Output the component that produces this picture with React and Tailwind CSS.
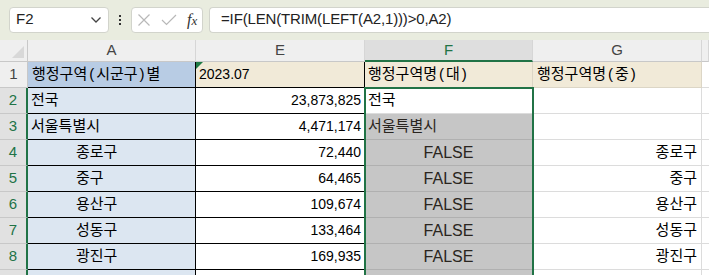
import React from 'react';

const KR = { fontFamily: '"Liberation Sans", "Noto Sans CJK KR", sans-serif' };

const rows = [
  { n: 2, a: '전국', indent: false, e: '23,873,825', f: '전국', g: '' },
  { n: 3, a: '서울특별시', indent: false, e: '4,471,174', f: '서울특별시', g: '' },
  { n: 4, a: '종로구', indent: true, e: '72,440', f: 'FALSE', g: '종로구' },
  { n: 5, a: '중구', indent: true, e: '64,465', f: 'FALSE', g: '중구' },
  { n: 6, a: '용산구', indent: true, e: '109,674', f: 'FALSE', g: '용산구' },
  { n: 7, a: '성동구', indent: true, e: '133,464', f: 'FALSE', g: '성동구' },
  { n: 8, a: '광진구', indent: true, e: '169,935', f: 'FALSE', g: '광진구' },
  { n: 9, a: '', indent: false, e: '', f: '', g: '' },
];

// wider parens, like the sheet font
function Label({ text }) {
  const parts = text.split(/([()])/);
  return (
    <span>
      {parts.map((p, i) =>
        p === '(' || p === ')' ? (
          <span key={i} className="mx-[2px]">{p}</span>
        ) : (
          <span key={i}>{p}</span>
        )
      )}
    </span>
  );
}

function FormulaBar() {
  return (
    <div className="flex items-center h-[40px] bg-[#e9ecdf] pl-[9px] pb-[7px] pt-[6px]">
      <div className="flex items-center justify-between w-[100px] h-[26px] bg-white border border-[#d2d4cc] rounded-[4px] pl-[6px] pr-[6px]">
        <span className="text-[15px] text-[#222]">F2</span>
        <svg width="12" height="8" viewBox="0 0 12 8">
          <path d="M1.5 1.5 L6 6 L10.5 1.5" fill="none" stroke="#444" strokeWidth="1.3" />
        </svg>
      </div>
      <div className="w-[22px] flex flex-col items-center gap-[2px]">
        <span className="w-[2px] h-[2px] bg-[#333]" />
        <span className="w-[2px] h-[2px] bg-[#333]" />
        <span className="w-[2px] h-[2px] bg-[#333]" />
      </div>
      <div className="flex items-center w-[72px] h-[26px] bg-white border border-[#d2d4cc] rounded-[4px] pl-[5px] gap-[10px]">
        <svg width="14" height="14" viewBox="0 0 14 14">
          <path d="M1.5 1.5 L12.5 12.5 M12.5 1.5 L1.5 12.5" stroke="#b8b8b8" strokeWidth="1.2" />
        </svg>
        <svg width="16" height="12" viewBox="0 0 16 12">
          <path d="M1 6 L5.5 10.5 L15 1" fill="none" stroke="#b8b8b8" strokeWidth="1.2" />
        </svg>
        <span className="text-[16px] italic text-[#333]" style={{ fontFamily: '"Liberation Serif", serif' }}>
          f<span className="text-[13px]">x</span>
        </span>
      </div>
      <div className="ml-[6px] flex-1 flex items-center h-[26px] bg-white border border-[#d2d4cc] border-r-0 rounded-l-[4px] pl-[11px]">
        <span className="text-[15px] tracking-[-0.15px] text-[#222]">=IF(LEN(TRIM(LEFT(A2,1)))&gt;0,A2)</span>
      </div>
    </div>
  );
}

function ColumnHeader() {
  const col = 'h-[22px] flex items-center justify-center text-[15px] border-r border-[#d6d6d6] border-b border-b-[#c8c8c8]';
  return (
    <div className="flex bg-[#efefef]">
      <div className="relative w-[28px] h-[22px] border-r border-b border-[#c8c8c8]">
        <svg className="absolute right-[3px] bottom-[3px]" width="12" height="12" viewBox="0 0 12 12">
          <path d="M12 0 L12 12 L0 12 Z" fill="#d8d8d8" />
        </svg>
      </div>
      <div className={`${col} w-[168px] text-[#444]`}>A</div>
      <div className={`${col} w-[169px] text-[#444]`}>E</div>
      <div className="w-[168px] h-[22px] flex items-center justify-center text-[15px] text-[#217346] bg-[#dedede] border-r border-[#d6d6d6] border-b-2 border-b-[#217346]">
        F
      </div>
      <div className={`${col} w-[169px] text-[#444]`}>G</div>
      <div className={`${col} flex-1`} />
    </div>
  );
}

function Row1() {
  return (
    <div className="flex h-[26px]">
      <div className="w-[28px] flex items-center justify-center bg-[#efefef] border-r border-b border-[#c8c8c8] text-[15px] text-[#444]">
        1
      </div>
      <div className="w-[168px] flex items-center pl-[4px] bg-[#b8cce4] border-r border-b border-black text-[15px] text-black">
        <Label text="행정구역(시군구)별" />
      </div>
      <div className="relative w-[169px] flex items-center pl-[3px] bg-[#f1ead8] border-r border-b border-black text-[14px] text-black">
        <svg className="absolute left-0 top-0" width="7" height="7" viewBox="0 0 7 7">
          <path d="M0 0 L7 0 L0 7 Z" fill="#1e7a45" />
        </svg>
        2023.07
      </div>
      <div className="w-[168px] flex items-center pl-[3px] bg-[#f1ead8] border-r border-b border-[#dcd6c6] text-[15px] text-black">
        <Label text="행정구역명(대)" />
      </div>
      <div className="w-[169px] flex items-center pl-[4px] bg-[#f1ead8] border-r border-b border-[#dcd6c6] text-[15px] text-black">
        <Label text="행정구역명(중)" />
      </div>
      <div className="flex-1 bg-white border-b border-[#dcdcdc]" />
    </div>
  );
}

function DataRow({ r }) {
  const active = r.n === 2;
  const isFalse = r.f === 'FALSE';
  return (
    <div className="flex h-[26px]">
      <div className="w-[28px] flex items-center justify-center bg-[#e1e1e1] border-r-2 border-r-[#217346] border-b border-b-[#c8c8c8] text-[15px] text-[#217346]">
        {r.n < 9 ? r.n : ''}
      </div>
      <div
        className={`w-[168px] flex items-center bg-[#dce6f1] border-r border-b border-black text-[15px] text-black ${r.indent ? 'pl-[48px]' : 'pl-[3px]'}`}
      >
        {r.a}
      </div>
      <div className="w-[169px] flex items-center justify-end pr-[3px] bg-white border-r border-b border-black text-[14px] text-black">
        {r.e}
      </div>
      <div
        className={`w-[168px] flex items-center border-r border-b text-[15px] ${active ? 'bg-white border-[#dcdcdc] text-black pl-[3px]' : 'bg-[#c6c6c6] border-[#b0b0b0] text-[#2a2520]'} ${isFalse ? 'justify-center text-[16px]' : 'pl-[3px]'}`}
      >
        {r.f}
      </div>
      <div className="w-[169px] flex items-center justify-end pr-[4px] bg-white border-r border-b border-[#dcdcdc] text-[15px] text-black">
        {r.g}
      </div>
      <div className="flex-1 bg-white border-b border-[#dcdcdc]" />
    </div>
  );
}

export default function App() {
  return (
    <div className="w-[709px] h-[275px] overflow-hidden bg-white" style={KR}>
      <FormulaBar />
      <ColumnHeader />
      <div className="relative">
        <Row1 />
        {rows.map((r) => (
          <DataRow key={r.n} r={r} />
        ))}
        {/* selection border F2:F9 */}
        <div className="absolute left-[364px] top-[25px] w-[170px] h-[220px] border-2 border-[#217346] pointer-events-none" />
      </div>
    </div>
  );
}
